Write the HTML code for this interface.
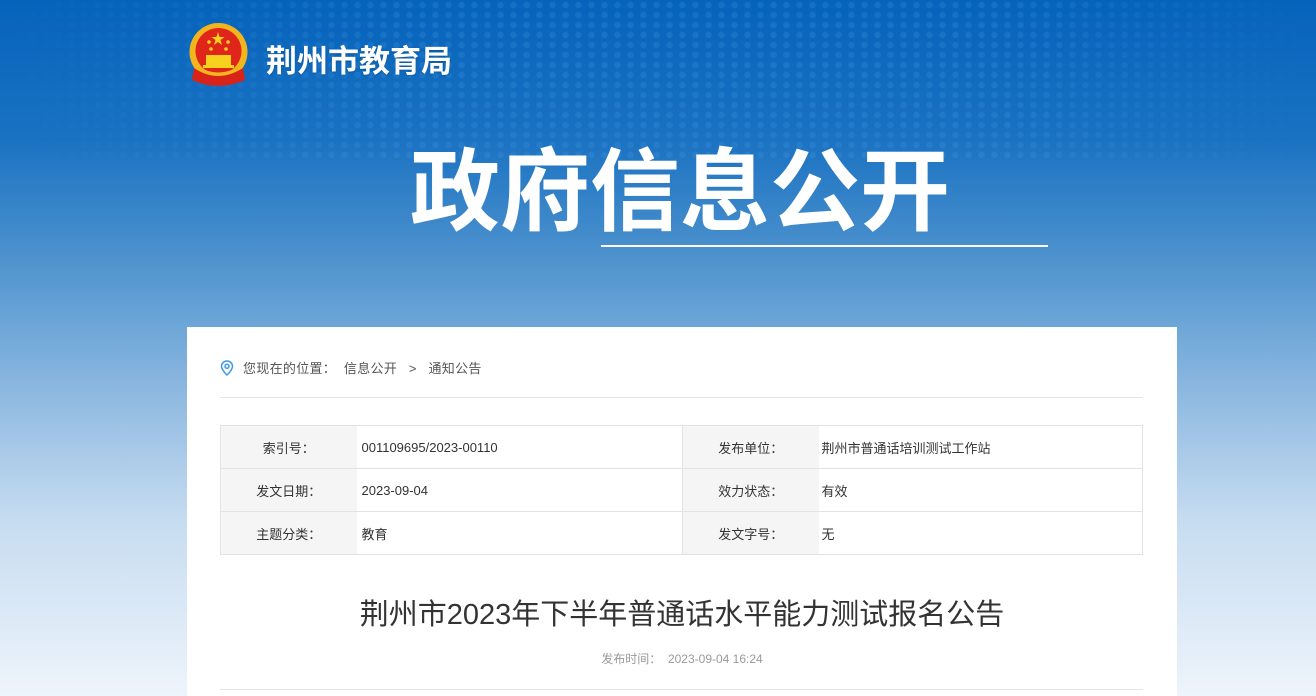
<!DOCTYPE html>
<html><head><meta charset="utf-8"><style>
*{margin:0;padding:0;box-sizing:border-box}
html,body{width:1316px;height:696px;overflow:hidden}
body{position:relative;font-family:"Liberation Sans","Noto Sans CJK SC",sans-serif;
background:linear-gradient(180deg,#0563bb 0px,#1a72c2 140px,#4a90cd 250px,#6fa7d8 330px,#9fc3e5 430px,#c6dcf0 520px,#eef4fb 696px) no-repeat;background-size:1316px 696px}
.dots{position:absolute;left:0;top:0;width:1316px;height:160px;
background-image:radial-gradient(circle,rgba(80,160,230,.45) 3px,transparent 3.5px);background-size:13px 10px;
-webkit-mask-image:linear-gradient(90deg,transparent 0,#000 400px,#000 1000px,transparent 1316px);opacity:.45}
.logo{position:absolute;left:188px;top:22px}
.site{position:absolute;left:266px;top:36px;color:#fff;font-size:31px;font-weight:bold;text-shadow:0 1px 2px rgba(0,0,0,.2)}
.big{position:absolute;left:410px;top:138px;color:#fff;font-size:90px;font-weight:bold;line-height:110px}
.uline{position:absolute;left:601px;top:245px;width:447px;height:2px;background:#fff}
.card{position:absolute;left:187px;top:327px;width:990px;height:369px;background:#fff;overflow:hidden}
.crumb{position:absolute;left:33px;top:31px;font-size:13px;color:#555;display:flex;align-items:center;white-space:pre}
.hr1{position:absolute;left:33px;top:70px;width:923px;height:1px;background:#e6e6e6}
table{position:absolute;left:33px;top:98px;width:923px;border-collapse:collapse;font-size:13px;color:#333}
td{border:1px solid #e3e3e3;height:43px;padding:0}
td.l{background:#f5f5f5;width:136px;text-align:center;border-right:none}
td.v{padding-left:5px;width:326px;border-left:none;border-right:none}
td.v2{padding-left:3px;border-left:none}
.title{position:absolute;left:0;width:990px;top:264px;text-align:center;font-size:29px;color:#333}
.date{position:absolute;left:0;width:990px;top:323px;text-align:center;font-size:12px;color:#999}
.hr2{position:absolute;left:33px;top:362px;width:923px;height:1px;background:#e6e6e6}
</style></head><body>
<div class="dots"></div>
<svg class="logo" width="61" height="66" viewBox="0 0 61 66">
<circle cx="30.5" cy="30" r="29" fill="#f2b51d"/>
<circle cx="30.5" cy="29" r="23" fill="#e0251b"/>
<polygon points="30,10 31.6,15 36.5,15 32.5,18 34,23 30,20 26,23 27.5,18 23.5,15 28.4,15" fill="#f7d21c"/>
<circle cx="21" cy="20" r="1.8" fill="#f7d21c"/><circle cx="40" cy="20" r="1.8" fill="#f7d21c"/>
<circle cx="23" cy="27" r="1.8" fill="#f7d21c"/><circle cx="38" cy="27" r="1.8" fill="#f7d21c"/>
<rect x="18" y="33" width="25" height="10" fill="#f7d21c"/>
<rect x="15" y="43" width="31" height="3" fill="#f7d21c"/>
<path d="M6 46 Q30 62 55 46 L57 58 Q30 70 4 58Z" fill="#d8231a"/>
<path d="M10 46 Q30 58 51 46" stroke="#f2b51d" stroke-width="3" fill="none"/>
</svg>
<div class="site">荆州市教育局</div>
<div class="big">政府信息公开</div>
<div class="uline"></div>
<div class="card">
<div class="crumb"><svg width="14" height="16" viewBox="0 0 14 16" style="margin-right:9px"><path d="M7 1C3.7 1 1.5 3.5 1.5 6.3 1.5 10 7 15 7 15s5.5-5 5.5-8.7C12.5 3.5 10.3 1 7 1z" fill="none" stroke="#3a9be0" stroke-width="1.5"/><circle cx="7" cy="6.3" r="2" fill="none" stroke="#3a9be0" stroke-width="1.5"/></svg><span style="letter-spacing:.3px">您现在的位置：  信息公开   &gt;   通知公告</span></div>
<div class="hr1"></div>
<table>
<tr><td class="l">索引号：</td><td class="v">001109695/2023-00110</td><td class="l">发布单位：</td><td class="v2">荆州市普通话培训测试工作站</td></tr>
<tr><td class="l">发文日期：</td><td class="v">2023-09-04</td><td class="l">效力状态：</td><td class="v2">有效</td></tr>
<tr><td class="l">主题分类：</td><td class="v">教育</td><td class="l">发文字号：</td><td class="v2">无</td></tr>
</table>
<div class="title">荆州市2023年下半年普通话水平能力测试报名公告</div>
<div class="date">发布时间：&nbsp;&nbsp;2023-09-04 16:24</div>
<div class="hr2"></div>
</div>
</body></html>
